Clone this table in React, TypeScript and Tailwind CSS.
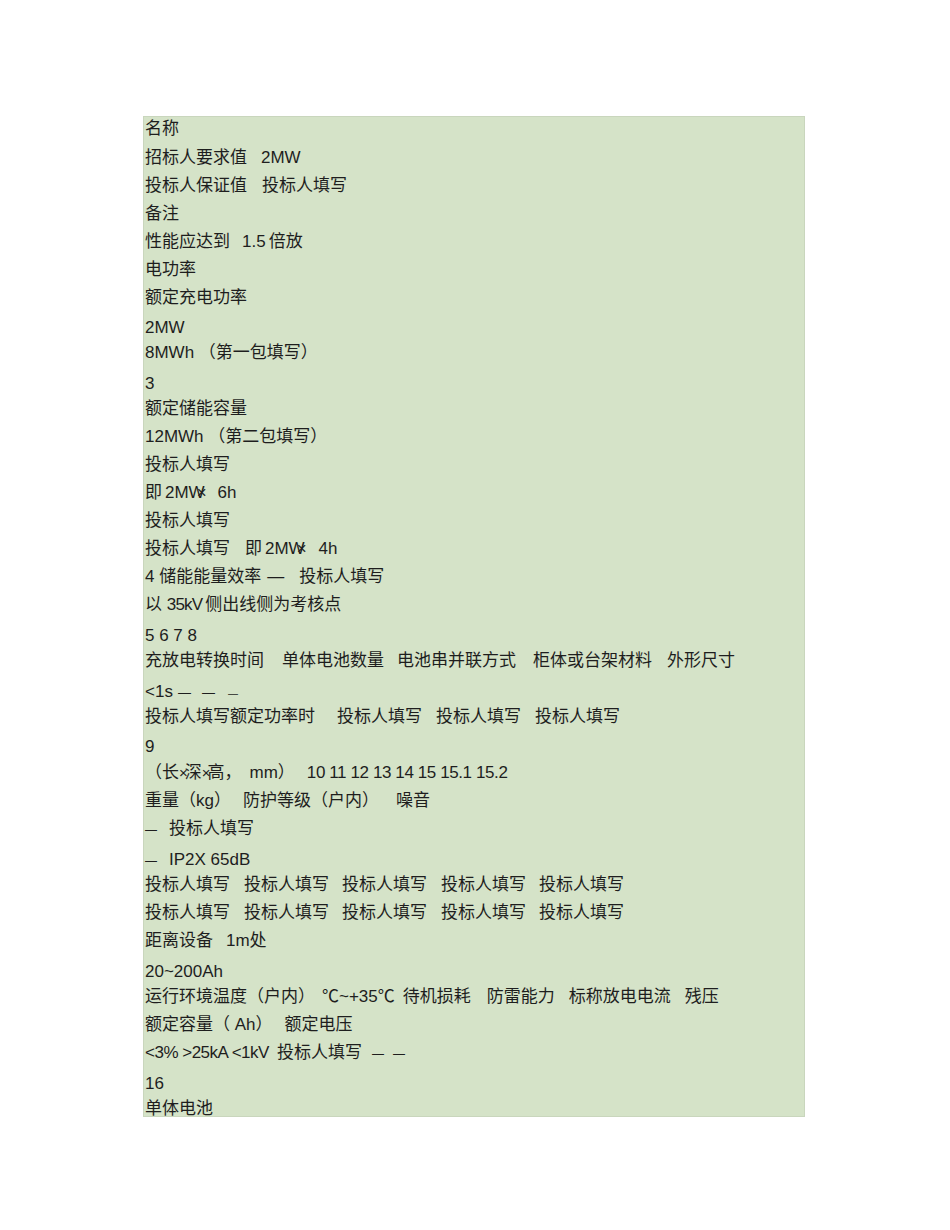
import React from 'react';

// spacer between the loose text runs of a line
const G = ({ w }: { w: string }) => <span className={`inline-block ${w}`} />;

const L = ({ m = '', children }: { m?: string; children: React.ReactNode }) => (
  <div className={`h-[28px] leading-[28px] whitespace-pre ${m}`}>{children}</div>
);

const Fill = () => (
  <>
    投标人填写<G w="w-[14px]" />投标人填写<G w="w-[13px]" />投标人填写<G w="w-[14px]" />投标人填写<G w="w-[13px]" />投标人填写
  </>
);

export default function App() {
  return (
    <div className="min-h-[1230px] w-[950px] bg-white pt-[116px] pl-[143px]">
      <div className="h-[1001px] w-[662px] border border-[#c9d6bd] bg-[#d5e3c8] pl-[1px] text-[17px] text-[#1e1e1e] font-['Liberation_Sans','Noto_Sans_CJK_SC',sans-serif]">
        <L m="-mt-[2px]">名称</L>
        <L m="mt-[1px]">招标人要求值<G w="w-[14px]" />2MW</L>
        <L>投标人保证值<G w="w-[15px]" />投标人填写</L>
        <L>备注</L>
        <L>性能应达到<G w="w-[12px]" />1.5<G w="w-[3px]" />倍放</L>
        <L>电功率</L>
        <L>额定充电功率</L>
        <L m="mt-[2px]">2MW</L>
        <L m="-mt-[3px]">8MWh （第一包填写）</L>
        <L m="mt-[3px]">3</L>
        <L m="-mt-[3px]">额定储能容量</L>
        <L>12MWh （第二包填写）</L>
        <L>投标人填写</L>
        <L>
          即<G w="w-[3px]" />2MW<span className="-ml-[8px]">×</span><G w="w-[11px]" />6h
        </L>
        <L>投标人填写</L>
        <L>
          投标人填写<G w="w-[15px]" />即<G w="w-[3px]" />2MW<span className="-ml-[8px]">×</span><G w="w-[12px]" />4h
        </L>
        <L>
          4 储能能量效率<G w="w-[6px]" />—<G w="w-[15px]" />投标人填写
        </L>
        <L>
          以 <span className="tracking-[-0.8px]">35kV</span><G w="w-[3px]" />侧出线侧为考核点
        </L>
        <L m="mt-[3px]">5 6 7 8</L>
        <L m="-mt-[3px]">
          充放电转换时间<G w="w-[18px]" />单体电池数量<G w="w-[13px]" />电池串并联方式<G w="w-[17px]" />柜体或台架材料<G w="w-[15px]" />外形尺寸
        </L>
        <L m="mt-[3px]">
          &lt;1s<G w="w-[5px]" />
          <span className="text-[13px]">—</span>
          <G w="w-[11px]" />
          <span className="text-[13px]">—</span>
          <G w="w-[13px]" />
          <span className="text-[10px]">—</span>
        </L>
        <L m="-mt-[3px]">
          投标人填写额定功率时<G w="w-[22px]" />投标人填写<G w="w-[14px]" />投标人填写<G w="w-[14px]" />投标人填写
        </L>
        <L m="mt-[2px]">9</L>
        <L m="-mt-[2px]">
          （长<span className="-mr-[3px] text-[15px]">×</span>深<span className="-mr-[3px] text-[15px]">×</span>高，<G w="w-[8px]" />
          mm）<G w="w-[12px]" />
          <span className="tracking-[-0.4px]">10 11 12 13 14 15 15.1 15.2</span>
        </L>
        <L>
          重量（kg）<G w="w-[12px]" />防护等级（户内）<G w="w-[17px]" />噪音
        </L>
        <L>
          <span className="text-[12px]">—</span>
          <G w="w-[12px]" />投标人填写
        </L>
        <L m="mt-[3px]">
          <span className="text-[12px]">—</span>
          <G w="w-[12px]" />IP2X 65dB
        </L>
        <L m="-mt-[3px]">
          <Fill />
        </L>
        <L>
          <Fill />
        </L>
        <L>
          距离设备<G w="w-[13px]" />1m处
        </L>
        <L m="mt-[3px]">20~200Ah</L>
        <L m="-mt-[3px]">
          运行环境温度（户内）<G w="w-[7px]" />℃~+35℃<G w="w-[8px]" />待机损耗<G w="w-[16px]" />防雷能力<G w="w-[14px]" />标称放电电流<G w="w-[14px]" />残压
        </L>
        <L>
          额定容量（ Ah）<G w="w-[12px]" />额定电压
        </L>
        <L>
          <span className="tracking-[-0.5px]">&lt;3% &gt;25kA &lt;1kV</span>
          <G w="w-[8px]" />投标人填写<G w="w-[10px]" />
          <span className="text-[12px]">—</span>
          <G w="w-[9px]" />
          <span className="text-[12px]">—</span>
        </L>
        <L m="mt-[3px]">16</L>
        <L m="-mt-[3px]">单体电池</L>
      </div>
    </div>
  );
}
